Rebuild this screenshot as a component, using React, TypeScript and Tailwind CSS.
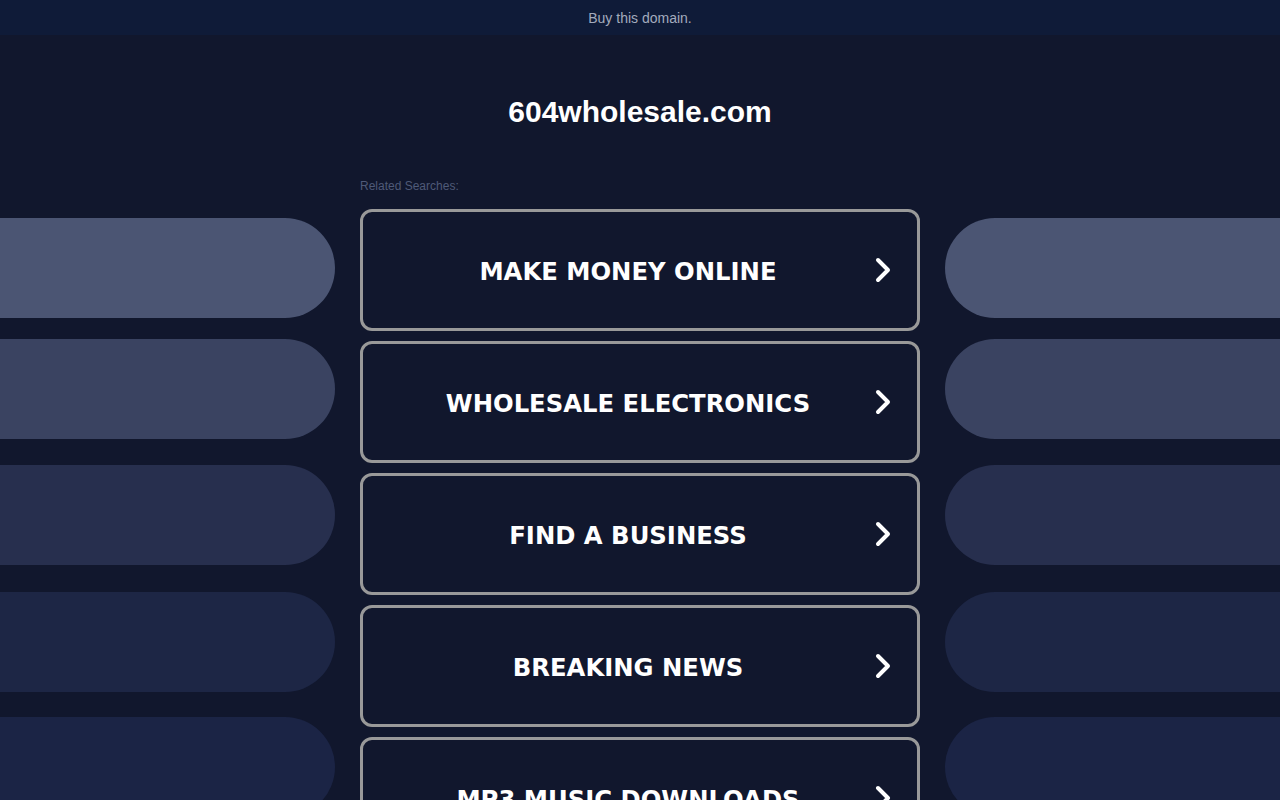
import React from "react";

const items = [
  "MAKE MONEY ONLINE",
  "WHOLESALE ELECTRONICS",
  "FIND A BUSINESS",
  "BREAKING NEWS",
  "MP3 MUSIC DOWNLOADS",
];

function Chevron() {
  return (
    <svg width="20" height="30" viewBox="0 0 20 30" className="absolute right-[24px] top-1/2 -translate-y-1/2">
      <path d="M5 5 L15 15 L5 25" fill="none" stroke="#ffffff" strokeWidth="4" strokeLinecap="round" strokeLinejoin="round" />
    </svg>
  );
}

function SidePills({ side }: { side: "left" | "right" }) {
  const round = side === "left" ? "rounded-r-[50px]" : "rounded-l-[50px]";
  return (
    <div className="flex w-[335px] shrink-0 flex-col pt-[43px]">
      <div className={`h-[100px] bg-[#4b5573] ${round}`} />
      <div className={`mt-[21px] h-[100px] bg-[#3a4361] ${round}`} />
      <div className={`mt-[26px] h-[100px] bg-[#272f4e] ${round}`} />
      <div className={`mt-[27px] h-[100px] bg-[#1d2645] ${round}`} />
      <div className={`mt-[25px] h-[100px] bg-[#1b2445] ${round}`} />
    </div>
  );
}

export default function App() {
  return (
    <div className="h-[800px] overflow-hidden bg-[#11172d]" style={{ fontFamily: '"Liberation Sans", Arial, sans-serif' }}>
      <div className="flex h-[35px] items-center justify-center bg-[#0f1b38] pt-[2px] text-[14px] text-[#a3abbd]">
        Buy this domain.
      </div>
      <div className="flex h-[140px] items-start justify-center pt-[60px]">
        <h1 className="text-[30px] font-bold leading-[34px] text-white">604wholesale.com</h1>
      </div>
      <div className="flex gap-[25px]">
        <SidePills side="left" />
        <div className="flex w-[560px] shrink-0 flex-col">
          <div className="h-[34px] pt-[4px] text-[12px] leading-[14px] text-[#4f5a78]">Related Searches:</div>
          <div className="flex flex-col gap-[10px]">
            {items.map((t) => (
              <div
                key={t}
                className="relative flex h-[122px] items-center justify-center rounded-[12px] border-[3px] border-[#999999] pr-[24px]"
              >
                <span
                  className="mt-[5px] text-[24.3px] font-bold text-white"
                  style={{ fontFamily: '"DejaVu Sans", Verdana, sans-serif' }}
                >
                  {t}
                </span>
                <Chevron />
              </div>
            ))}
          </div>
        </div>
        <SidePills side="right" />
      </div>
    </div>
  );
}
